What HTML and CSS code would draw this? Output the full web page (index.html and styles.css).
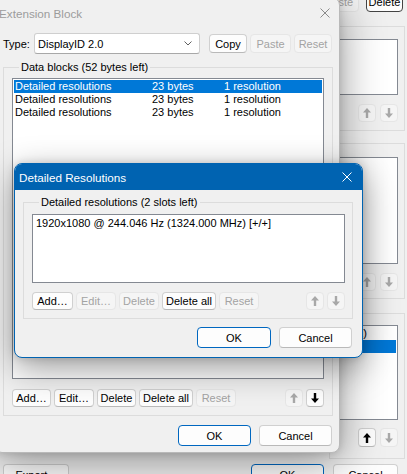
FILE: index.html
```html
<!DOCTYPE html>
<html>
<head>
<meta charset="utf-8">
<link rel="stylesheet" href="styles.css">
</head>
<body>
<div class="desk">
  <div class="bgwin">
    <div class="bg-top">
      <div class="btn dis w-paste">Paste</div>
      <div class="btn focus w-del">Delete</div>
    </div>
    <div class="bg-col">
      <div class="bgrp g1">
        <div class="lst l1"></div>
        <div class="arrows">
          <div class="btn dis arr"><svg class="ar" viewBox="0 0 8 10"><path d="M4 0L8 4.6H5.2V10H2.8V4.6H0Z"/></svg></div>
          <div class="btn dis arr"><svg class="ar" viewBox="0 0 8 10"><path d="M4 10L8 5.4H5.2V0H2.8V5.4H0Z"/></svg></div>
        </div>
      </div>
      <div class="bgrp g2">
        <div class="lst l2"></div>
        <div class="arrows">
          <div class="btn dis arr"><svg class="ar" viewBox="0 0 8 10"><path d="M4 0L8 4.6H5.2V10H2.8V4.6H0Z"/></svg></div>
          <div class="btn dis arr"><svg class="ar" viewBox="0 0 8 10"><path d="M4 10L8 5.4H5.2V0H2.8V5.4H0Z"/></svg></div>
        </div>
      </div>
      <div class="bgrp g3">
        <div class="lst l3">
          <div class="brow">(1)</div>
          <div class="brow sel">&nbsp;</div>
        </div>
        <div class="arrows">
          <div class="btn arr"><svg class="ar" viewBox="0 0 8 10"><path d="M4 0L8 4.6H5.2V10H2.8V4.6H0Z"/></svg></div>
          <div class="btn dis arr"><svg class="ar" viewBox="0 0 8 10"><path d="M4 10L8 5.4H5.2V0H2.8V5.4H0Z"/></svg></div>
        </div>
      </div>
    </div>
    <div class="bg-bottom">
      <div class="btn w-export">Export...</div>
      <div class="grow"></div>
      <div class="btn def w-bok">OK</div>
      <div class="btn w-bcancel">Cancel</div>
    </div>
  </div>

  <div class="win ext">
    <div class="titlebar">
      <span class="title">Extension Block</span>
      <svg class="close" viewBox="0 0 10 10"><path d="M0.5 0.5L9.5 9.5M9.5 0.5L0.5 9.5"/></svg>
    </div>
    <div class="ext-body">
      <div class="type-row">
        <span class="type-label">Type:</span>
        <div class="combo">
          <span>DisplayID 2.0</span>
          <svg class="chev" viewBox="0 0 8 5"><path d="M0.5 0.5L4 4L7.5 0.5"/></svg>
        </div>
        <div class="btn w-copy">Copy</div>
        <div class="btn dis w-paste2">Paste</div>
        <div class="btn dis w-reset">Reset</div>
      </div>
      <fieldset class="grp ext-grp">
        <legend>Data blocks (52 bytes left)</legend>
        <div class="lst ext-list">
          <div class="row sel"><span class="c1">Detailed resolutions</span><span class="c2">23 bytes</span><span>1 resolution</span></div>
          <div class="row"><span class="c1">Detailed resolutions</span><span class="c2">23 bytes</span><span>1 resolution</span></div>
          <div class="row"><span class="c1">Detailed resolutions</span><span class="c2">23 bytes</span><span>1 resolution</span></div>
        </div>
        <div class="btn-row">
          <div class="btn w39">Add…</div>
          <div class="btn w40">Edit…</div>
          <div class="btn w39">Delete</div>
          <div class="btn w54">Delete all</div>
          <div class="btn dis w40">Reset</div>
          <div class="grow"></div>
          <div class="btn dis arr"><svg class="ar" viewBox="0 0 8 10"><path d="M4 0L8 4.6H5.2V10H2.8V4.6H0Z"/></svg></div>
          <div class="btn arr"><svg class="ar" viewBox="0 0 8 10"><path d="M4 10L8 5.4H5.2V0H2.8V5.4H0Z"/></svg></div>
        </div>
      </fieldset>
      <div class="ok-row">
        <div class="btn def w-ok">OK</div>
        <div class="btn w-ok">Cancel</div>
      </div>
    </div>
  </div>

  <div class="win dlg">
    <div class="titlebar dlg-title">
      <span class="title">Detailed Resolutions</span>
      <svg class="close" viewBox="0 0 10 10"><path d="M0.5 0.5L9.5 9.5M9.5 0.5L0.5 9.5"/></svg>
    </div>
    <div class="dlg-body">
      <fieldset class="grp dlg-grp">
        <legend>Detailed resolutions (2 slots left)</legend>
        <div class="lst dlg-list">
          <div class="drow">1920x1080 @ 244.046 Hz (1324.000 MHz) [+/+]</div>
        </div>
        <div class="btn-row">
          <div class="btn w41">Add…</div>
          <div class="btn dis w40">Edit…</div>
          <div class="btn dis w40">Delete</div>
          <div class="btn w54">Delete all</div>
          <div class="btn dis w40">Reset</div>
          <div class="grow"></div>
          <div class="btn dis arr"><svg class="ar" viewBox="0 0 8 10"><path d="M4 0L8 4.6H5.2V10H2.8V4.6H0Z"/></svg></div>
          <div class="btn dis arr"><svg class="ar" viewBox="0 0 8 10"><path d="M4 10L8 5.4H5.2V0H2.8V5.4H0Z"/></svg></div>
        </div>
      </fieldset>
      <div class="ok-row dlg-ok">
        <div class="btn def w-ok2">OK</div>
        <div class="btn w-ok">Cancel</div>
      </div>
    </div>
  </div>
</div>
</body>
</html>
```

FILE: styles.css
```css
* { box-sizing: border-box; }
html, body { margin: 0; padding: 0; }
body {
  width: 407px;
  height: 474px;
  overflow: hidden;
  font-family: "Liberation Sans", Arial, sans-serif;
  font-size: 11px;
  color: #000;
  background: #f0f0f0;
}
.desk { position: relative; width: 407px; height: 474px; overflow: hidden; }

/* generic buttons */
.btn {
  height: 18px;
  border: 1px solid #d0d0d0;
  border-bottom-color: #b9b9b9;
  border-radius: 4px;
  background: #fdfdfd;
  color: #000;
  display: flex;
  align-items: center;
  justify-content: center;
  white-space: nowrap;
  flex: none;
}
.btn.dis { background: #f5f5f5; border-color: #e6e6e6; color: #a3a3a3; }
.btn.def { border: 1px solid #0067c0; }
.btn.focus { border: 1px solid #444; }
.arr { width: 18px; }
.ar { width: 8px; height: 10px; fill: #000; }
.btn.dis .ar { fill: #a8a8a8; }
.grow { flex: 1; }
.w39 { width: 39px; }
.w40 { width: 40px; }
.w41 { width: 41px; }
.w54 { width: 54px; }

/* list boxes & groups */
.lst { background: #fff; border: 1px solid #848992; }
.grp {
  margin: 0;
  border: 1px solid #dcdcdc;
  min-width: 0;
}
.grp legend {
  padding: 0 2px;
  margin-left: 7px;
  line-height: 16px;
}

/* background window */
.bgwin { width: 407px; height: 474px; background: #f0f0f0; display: flex; flex-direction: column; }
.bg-top { height: 12px; display: flex; justify-content: flex-end; align-items: flex-end; gap: 7px; padding-right: 4px; }
.bg-top .btn { height: 21px; }
.w-paste { width: 40px; }
.w-del { width: 37px; }
.bg-col { margin-top: 14px; display: flex; flex-direction: column; align-items: flex-end; padding-right: 2px; }
.bgrp { width: 76px; border: 1px solid #dcdcdc; padding: 0 6px 0 3px; }
.bgrp .arrows { display: flex; justify-content: flex-end; gap: 4px; }
.g1 { height: 105px; padding-top: 12px; }
.g1 .lst { height: 56px; }
.g1 .arrows { margin-top: 9px; }
.g2 { margin-top: 12px; height: 156px; padding-top: 13px; }
.g2 .lst { height: 107px; }
.g2 .arrows { margin-top: 9px; }
.g3 { margin-top: 14px; height: 146px; padding-top: 11px; }
.g3 .lst { height: 95px; padding-top: 1px; }
.g3 .arrows { margin-top: 8px; }
.g3 .arr { height: 19px; }
.brow { height: 13px; line-height: 13px; text-align: right; padding-right: 29px; margin: 0 1px; white-space: nowrap; }
.brow.sel { background: #0078d7; }
.bg-bottom { margin-top: auto; height: 10px; display: flex; align-items: flex-start; padding: 0 9px 0 3px; gap: 9px; }
.bg-bottom .btn { height: 22px; }
.w-export { width: 66px; }
.w-bok { width: 73px; }
.w-bcancel { width: 65px; }

/* windows */
.win { position: absolute; background: #f0f0f0; border-radius: 8px; }
.ext {
  left: -6px; top: -3px; width: 346px; height: 456px;
  border: 1px solid #b9b9b9;
  box-shadow: 0 8px 44px rgba(0,0,0,0.42), 0 0 8px rgba(0,0,0,0.14);
}
.dlg {
  left: 14px; top: 163px; width: 349px; height: 195px;
  border: 1px solid #0063b1;
  overflow: hidden;
  box-shadow: 0 10px 34px rgba(0,0,0,0.40), 0 0 8px rgba(0,0,0,0.14);
}
.titlebar { height: 30px; display: flex; align-items: center; padding-left: 4px; padding-right: 9px; }
.titlebar .title { flex: 1; color: #9c9c9c; font-size: 11.7px; white-space: nowrap; }
.close { width: 10px; height: 10px; stroke: #8a8a8a; stroke-width: 1; fill: none; }
.dlg-title { height: 26px; background: #0063b1; padding-left: 4px; padding-right: 10px; }
.dlg-title .title { color: #fff; }
.dlg-title .close { stroke: #fff; }

/* extension block body */
.ext-body { padding: 5px 6px 0 8px; }
.type-row { height: 21px; display: flex; align-items: center; }
.type-label { width: 31px; }
.combo {
  width: 166px; height: 21px; margin-right: 9px;
  background: #fff; border: 1px solid #cfcfcf; border-bottom-color: #a8a8a8; border-radius: 3px;
  display: flex; align-items: center; padding-left: 3px; padding-right: 7px;
}
.combo span { flex: 1; }
.chev { width: 8px; height: 5px; stroke: #606060; fill: none; stroke-width: 1; }
.type-row .btn { height: 19px; }
.w-copy { width: 38px; }
.w-paste2 { width: 41px; margin-left: 3px; }
.w-reset { width: 38px; margin-left: 3px; }

.ext-grp { margin-top: 5px; padding: 3px 8px 8px 8px; }
.ext-list { height: 301px; padding-top: 1px; }
.row { display: flex; height: 13px; line-height: 13px; margin: 0 1px; padding-left: 1px; white-space: nowrap; }
.row.sel { background: #0078d7; color: #fff; }
.c1 { width: 137px; }
.c2 { width: 72px; }
.btn-row { display: flex; gap: 3px; margin-top: 10px; }
.ok-row { display: flex; justify-content: flex-end; gap: 8px; margin-top: 9px; margin-right: 1px; }
.ok-row .btn { height: 21px; }
.w-ok { width: 73px; }
.w-ok2 { width: 74px; }

/* detailed resolutions dialog */
.dlg-body { padding: 4px 9px 0 8px; }
.dlg-grp { padding: 4px 7px 8px 8px; }
.dlg-list { height: 69px; padding: 2px 3px; }
.drow { height: 13px; line-height: 13px; white-space: nowrap; }
.dlg-grp .btn-row { margin-top: 9px; }
.dlg-ok { margin-top: 8px; }
```
